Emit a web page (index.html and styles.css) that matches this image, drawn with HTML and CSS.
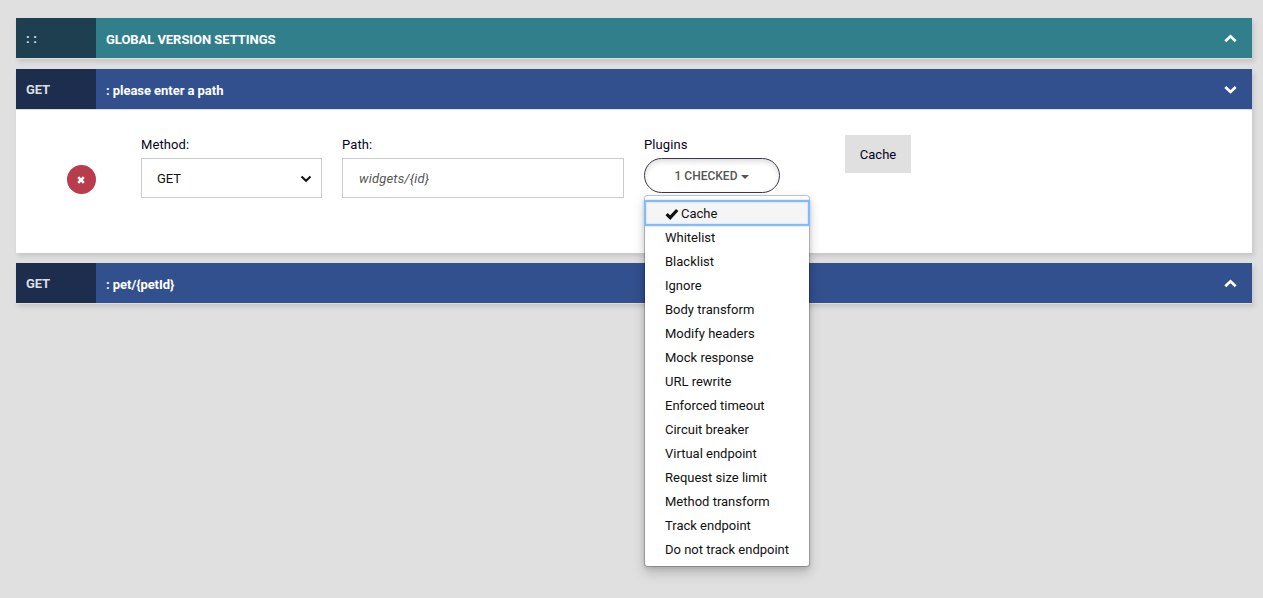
FILE: index.html
```html
<!DOCTYPE html>
<html lang="en">
<head>
<meta charset="utf-8">
<title>Endpoint designer</title>
<link rel="stylesheet" href="styles.css">
</head>
<body>
<main class="panels">
  <section class="panel">
    <header class="bar bar-global">
      <div class="tag">: :</div>
      <h2 class="title title-global">GLOBAL VERSION SETTINGS</h2>
      <svg class="chevron" viewBox="0 0 12 8"><path d="M1.2 6.6 6 2l4.8 4.6"/></svg>
    </header>
  </section>
  <section class="panel">
    <header class="bar">
      <div class="tag">GET</div>
      <h2 class="title title-path">: please enter a path</h2>
      <svg class="chevron" viewBox="0 0 12 8"><path d="M1.2 1.6 6 6.2l4.8-4.6"/></svg>
    </header>
    <div class="content">
      <button class="remove" aria-label="Remove"><svg viewBox="0 0 8 8"><path d="M1.2 1.2l5.6 5.6M6.8 1.2L1.2 6.8"/></svg></button>
      <div class="field method">
        <label class="label label-method">Method:</label>
        <div class="control"><span class="value">GET</span><svg class="arrow" viewBox="0 0 12 8"><path d="M1.5 1.5 6 5.8l4.5-4.3"/></svg></div>
      </div>
      <div class="field path">
        <label class="label">Path:</label>
        <div class="control"><span class="placeholder">widgets/{id}</span></div>
      </div>
      <div class="field plugins">
        <label class="label">Plugins</label>
        <button class="pill"><span>1 CHECKED</span><i class="caret"></i></button>
        <ul class="menu">
          <li class="item checked"><svg class="tick" viewBox="0 0 14 12"><path d="M1.6 6.2 5.2 9.6 12.2 2"/></svg><span>Cache</span></li>
          <li class="item">Whitelist</li>
          <li class="item">Blacklist</li>
          <li class="item">Ignore</li>
          <li class="item">Body transform</li>
          <li class="item">Modify headers</li>
          <li class="item">Mock response</li>
          <li class="item">URL rewrite</li>
          <li class="item">Enforced timeout</li>
          <li class="item">Circuit breaker</li>
          <li class="item">Virtual endpoint</li>
          <li class="item">Request size limit</li>
          <li class="item">Method transform</li>
          <li class="item">Track endpoint</li>
          <li class="item">Do not track endpoint</li>
        </ul>
      </div>
      <div class="chip">Cache</div>
    </div>
  </section>
  <section class="panel">
    <header class="bar">
      <div class="tag">GET</div>
      <h2 class="title title-path">: pet/{petId}</h2>
      <svg class="chevron" viewBox="0 0 12 8"><path d="M1.2 6.6 6 2l4.8 4.6"/></svg>
    </header>
  </section>
</main>
</body>
</html>
```
FILE: styles.css
```css
* { box-sizing: border-box; }
body {
  margin: 0;
  min-height: 598px;
  background: #e0e0e0;
  color: #03031e;
  font: 13px/20px Roboto, sans-serif;
}
svg { fill: none; stroke: currentColor; }
.panels {
  display: flex;
  flex-direction: column;
  gap: 10px;
  padding: 18px 11px 0 16px;
}
.panel { box-shadow: 2px 3px 5px rgba(0, 0, 0, .12); }
.bar {
  display: flex;
  align-items: center;
  height: 41px;
  padding-right: 15px;
  border-bottom: 1px solid #ddd;
  background: #32508e padding-box;
  color: #fff;
}
.bar-global { background-color: #327f8c; }
.tag {
  align-self: stretch;
  width: 80px;
  padding: 11px 10px 9px;
  background: #1d2d4e;
  color: #dcdfe4;
  font-weight: 700;
  letter-spacing: -.2px;
}
.bar-global .tag { background: #1e3f50; letter-spacing: .2px; }
.title {
  flex: 1;
  margin: 0;
  padding: 3px 10px 0;
  font-size: 13px;
  line-height: 20px;
  font-weight: 700;
  letter-spacing: -.05px;
}
.chevron { width: 13px; height: 9px; stroke-width: 2.5; }
.content {
  display: flex;
  height: 143px;
  padding: 24px 0 0 51px;
  background: #fff;
}
.remove {
  display: flex;
  align-items: center;
  justify-content: center;
  width: 29px;
  height: 29px;
  margin: 31px 45px 0 0;
  padding: 1px 1px 0 0;
  border: 0;
  border-radius: 50%;
  background: #b93c4c;
  color: #fff;
}
.remove svg { width: 8px; height: 8px; stroke-width: 2.6; }
.field { position: relative; margin-right: 20px; }
.label { display: block; height: 24px; padding-top: 1px; letter-spacing: .1px; }
.control {
  display: flex;
  align-items: center;
  justify-content: space-between;
  height: 40px;
  padding: 1px 9px 0 16px;
  border: 1px solid #ccc;
}
.method { width: 181px; }
.method .control { padding-left: 15px; }
.path { width: 282px; }
.plugins { width: 181px; }
.value { color: #111; }
.placeholder { color: #555; font-style: italic; letter-spacing: .18px; }
.arrow { width: 12px; height: 8px; color: #111; stroke-width: 2; }
.pill {
  display: flex;
  align-items: center;
  justify-content: center;
  gap: 4px;
  width: 136px;
  height: 35px;
  padding: 0;
  border: 1px solid #383848;
  border-radius: 18px;
  background: #fff;
  box-shadow: inset 0 3px 5px rgba(0, 0, 0, .125);
  color: #555;
  font: 500 12px/18px Roboto, sans-serif;
}
.caret {
  border-top: 4px solid;
  border-right: 4px solid transparent;
  border-left: 4px solid transparent;
  margin-top: 2px;
}
.menu {
  position: absolute;
  top: 61px;
  left: 0;
  z-index: 2;
  width: 166px;
  height: 372px;
  margin: 0;
  padding: 5px 0;
  border: 1px solid rgba(0, 0, 0, .2);
  border-radius: 4px;
  background: #fff padding-box;
  box-shadow: 0 6px 12px rgba(0, 0, 0, .175), 0 2px 4px rgba(0, 0, 0, .1);
  color: #111;
  list-style: none;
}
.item { height: 24px; padding: 3px 20px 1px; white-space: nowrap; }
.checked {
  display: flex;
  align-items: center;
  gap: 2px;
  background: #f5f5f5;
  outline: 2px solid #83baf8;
  outline-offset: -1px;
  box-shadow: 0 0 2px 1px #a8cffa, inset 0 0 2px 1px #a8cffa;
}
.tick { width: 14px; height: 12px; stroke-width: 3.2; }
.chip {
  width: 66px;
  height: 38px;
  margin-top: 1px;
  padding: 10px 0 8px;
  background: #e0e0e0;
  text-align: center;
}
```
